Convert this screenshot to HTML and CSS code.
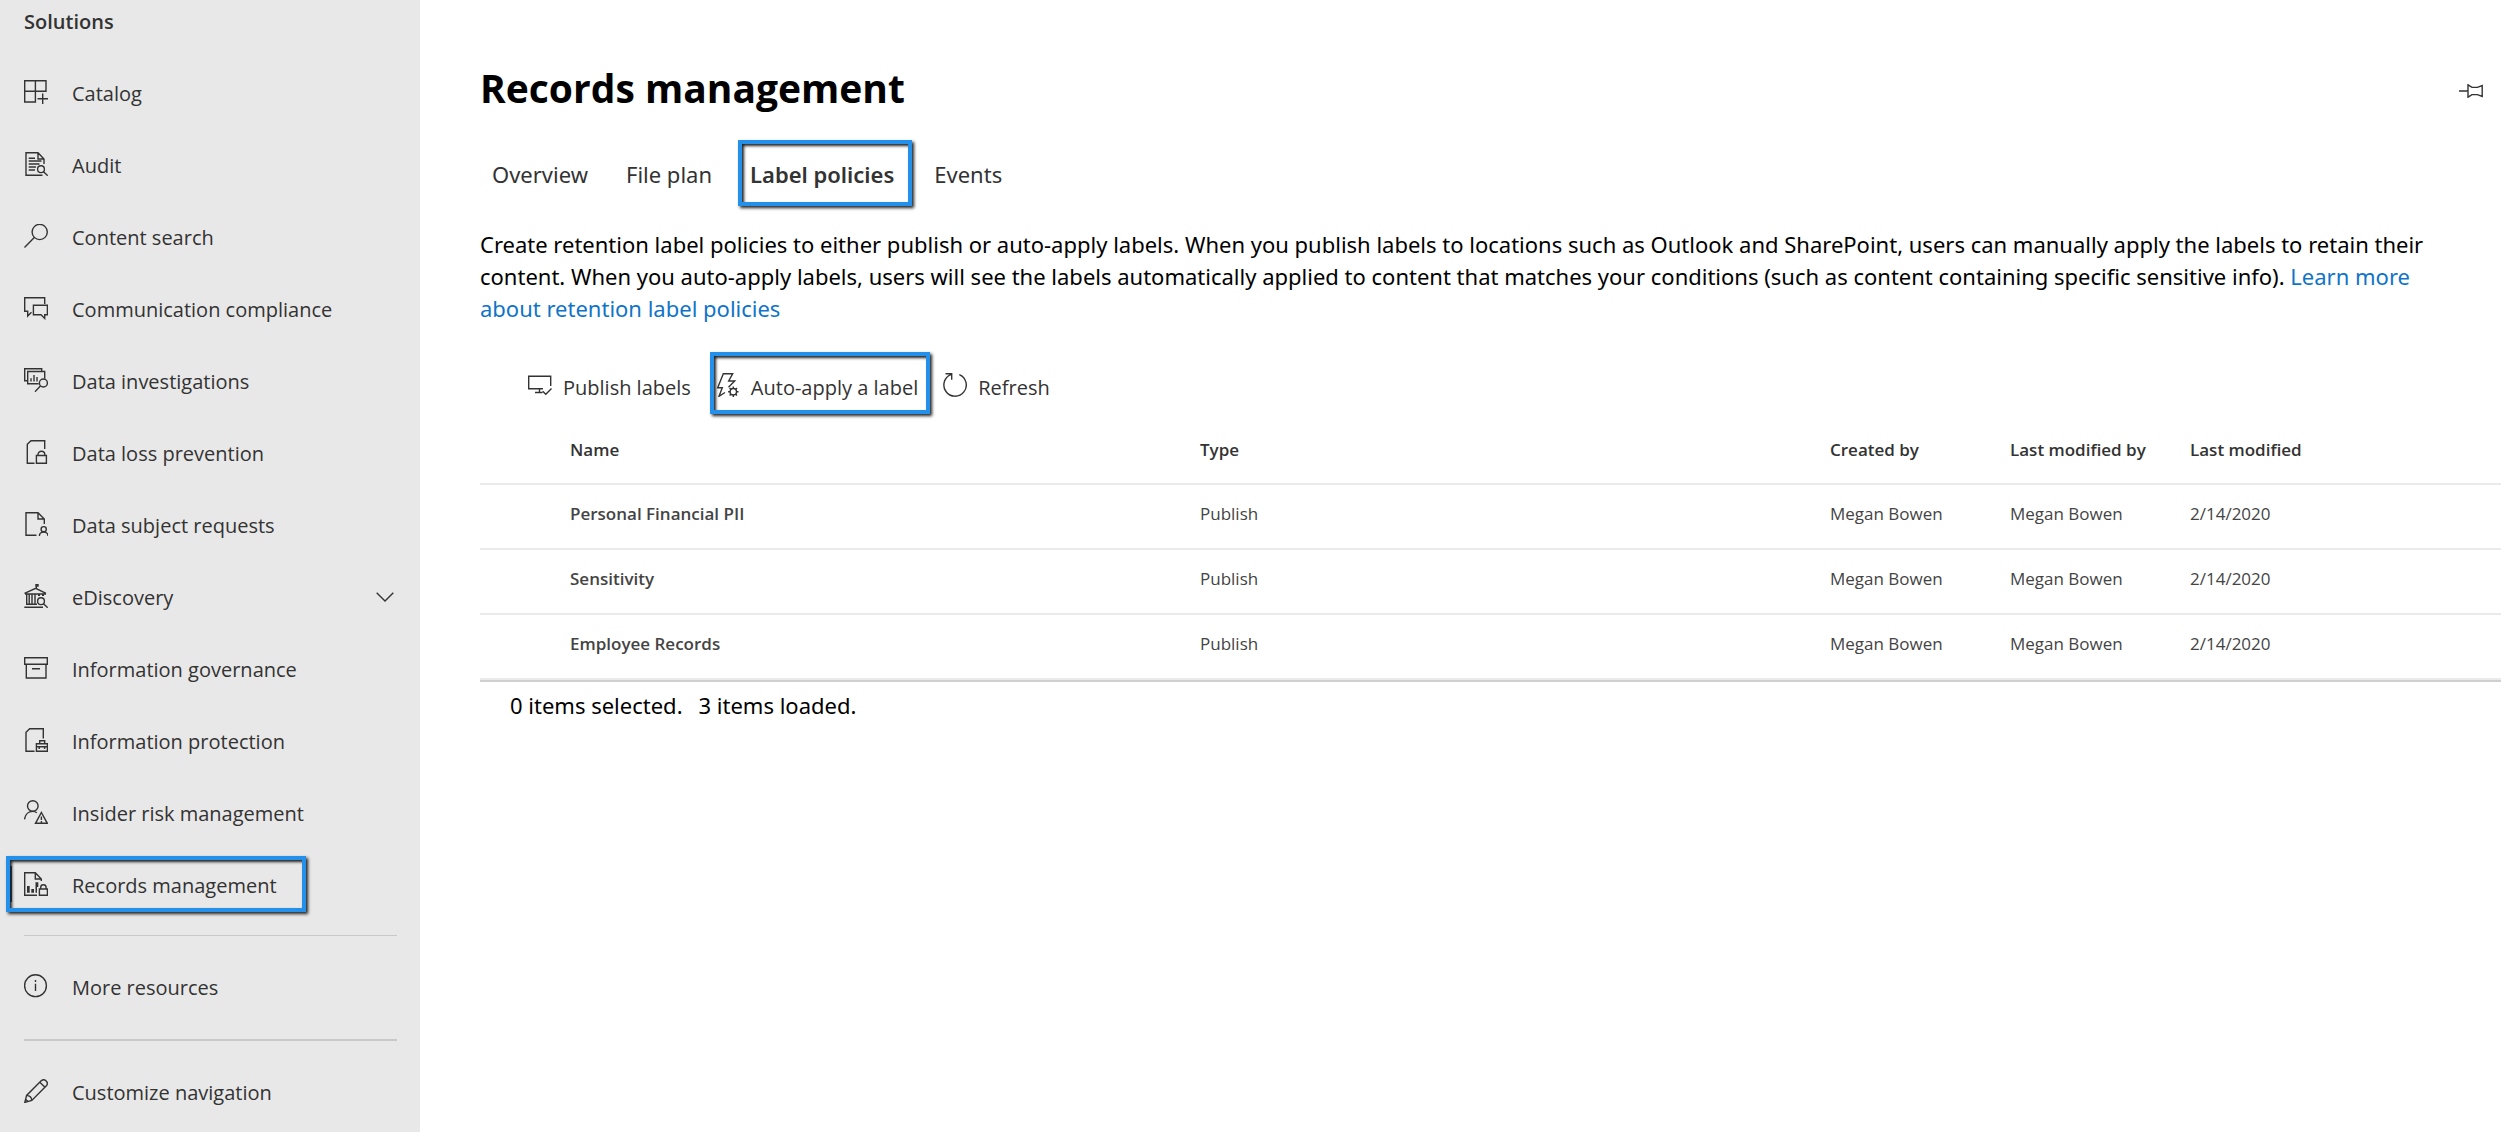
FILE: index.html
```html
<!DOCTYPE html>
<html lang="en">
<head>
<meta charset="utf-8">
<title>Records management</title>
<meta name="viewport" content="width=device-width, initial-scale=1">
<link rel="stylesheet" href="styles.css">
</head>
<body>
<div class="layout">
  <nav class="sidebar" aria-labelledby="nav-title">
    <h2 class="sidebar-title" id="nav-title">Solutions</h2>
    <ul class="nav-list">
      <li><a class="nav-item" href="#catalog"><svg class="icon" viewBox="0 0 24 24"><path d="M.7.7H22V11.3H.7zM11.4.7V22H.7V11M18.7 13.5V24M13.5 18.7H24"/></svg>Catalog</a></li>
      <li><a class="nav-item" href="#audit"><svg class="icon" viewBox="0 0 24 24"><path d="M18.5 23.3H2V.7H14L20 7V12M14 .7V7H20M4.7 6.3H11M4.7 9H17.5M4.7 12H15.5M4.7 15H12M4.7 18H11M19.5 19.7L23.7 23.7"/><circle cx="17" cy="17.2" r="3.4"/></svg>Audit</a></li>
      <li><a class="nav-item" href="#search"><svg class="icon" viewBox="0 0 24 24"><circle cx="15.7" cy="8" r="7.6"/><path d="M10.3 13.4L.5 23.4"/></svg>Content search</a></li>
      <li><a class="nav-item" href="#communication"><svg class="icon" viewBox="0 0 24 24"><path d="M20.7 8V1.7H.7V15.3H3.7V20L7.5 16.2M9.4 9.3H23.4V18.7H20.7V22.4L17 18.7H9.4z"/></svg>Communication compliance</a></li>
      <li><a class="nav-item" href="#investigations"><svg class="icon" viewBox="0 0 24 24"><path d="M3.7 12.7H.7V.7H17.7V3.3M14.7 15.7H3.7V3.5H20.7V10.5M7 10.3V13.5M10 7V13.5M13 9V13.5M16.4 18L11 23.7"/><circle cx="19.4" cy="15" r="4"/></svg>Data investigations</a></li>
      <li><a class="nav-item" href="#dlp"><svg class="icon" viewBox="0 0 24 24"><path d="M20.7 9V.7H7L3.3 4.3V23.3H10.5M12.4 15.5H22.4V23.3H12.4zM14 15.5V14.6a3.4 3.4 0 0 1 6.8 0V15.5"/></svg>Data loss prevention</a></li>
      <li><a class="nav-item" href="#subject-requests"><svg class="icon" viewBox="0 0 24 24"><path d="M12.5 23.3H2V.7H14L20.3 7V12M14 .7V7H20M15.4 24C15.4 18.8 24 18.8 24 24"/><circle cx="19.7" cy="17.2" r="2.6"/></svg>Data subject requests</a></li>
      <li><button class="nav-item" type="button" aria-expanded="false"><svg class="icon" viewBox="0 0 24 24"><path d="M12.3 0V4.5M.5 9.3L11.7 4.3L22 9.3M1 10H22M2.7 10V20M5.2 10V20M8 10V20M11 10V20M2 20.3H13M.3 23.3H19M19.5 19.7L23.7 23.7"/><path class="solid" d="M11.5 0H14.7V2.7H11.5zM14 10h2v2h-2zM18 10h2v2h-2z"/><circle cx="17" cy="17.2" r="3.4"/></svg>eDiscovery<svg class="chevron" viewBox="0 0 18 10"><path d="M.7.7L9 9L17.3.7"/></svg></button></li>
      <li><a class="nav-item" href="#governance"><svg class="icon" viewBox="0 0 24 24"><path d="M.7 1.8H23.3V8.3H.7zM2.3 8.3V22H22V8.3M8 12.7H16"/></svg>Information governance</a></li>
      <li><a class="nav-item" href="#protection"><svg class="icon" viewBox="0 0 24 24"><path d="M19.3 10.5V.7H5.7L2 4.3V23.3H10.5M12.4 15.7H23.4V23.3H12.4zM15.7 15.7V12.7H20.7V15.7M12.4 18.7H23.4M15.2 18V21M20.6 18V21"/></svg>Information protection</a></li>
      <li><a class="nav-item" href="#insider-risk"><svg class="icon" viewBox="0 0 24 24"><circle cx="8.8" cy="6" r="5.3"/><path d="M.5 19.3C1.2 14.5 4.5 11.4 8.8 11.4C10.5 11.4 11.6 11.9 12.8 12.8M17.4 12.5L23.3 23.3H11.5zM17.4 16.5V20M17.4 21V22.6"/></svg>Insider risk management</a></li>
      <li><a class="nav-item current highlight" href="#records" aria-current="page"><svg class="icon" viewBox="0 0 24 24"><path d="M13 23.3H.7V.7H11.3L17.3 7V9M11.3.7V7H17.3M15.4 17H23.4V23.3H15.4zM16.7 17V15.4a2.7 2.7 0 0 1 5.4 0V17"/><path class="solid" d="M3 14H5.7V20.7H3zM7.3 17H10V20.7H7.3zM11.5 10.3H14.3V15H13V20.7H11.5z"/></svg>Records management</a></li>
    </ul>
    <hr class="divider">
    <a class="nav-item" href="#more"><svg class="icon" viewBox="0 0 24 24"><circle cx="11.5" cy="11.7" r="10.9"/><path d="M11.5 9.7V17M11.5 6V8"/></svg>More resources</a>
    <hr class="divider thick">
    <a class="nav-item" href="#customize"><svg class="icon" viewBox="0 0 24 24"><path d="M.8 23.4L2.6 16.4L17.4 1.6C20.7-.8 25 3.2 22.6 6.6L7.8 21.4zM2.6 16.4C5.4 16.6 7.6 18.6 7.8 21.4M15.8 3.2L21 8.2M1.6 20.2L4 22.6"/></svg>Customize navigation</a>
  </nav>

  <main class="content">
    <header class="page-header">
      <h1 class="page-title">Records management</h1>
      <button class="pin" type="button" aria-label="Pin"><svg viewBox="0 0 24 14"><path d="M0 7H9M9 .8V13.2L13 10.6H18.4L23.2 12.4V1.6L18.4 3.4H13z"/></svg></button>
    </header>

    <div class="tabs" role="tablist">
      <button class="tab" type="button" role="tab" aria-selected="false">Overview</button>
      <button class="tab" type="button" role="tab" aria-selected="false">File plan</button>
      <button class="tab selected highlight" type="button" role="tab" aria-selected="true">Label policies</button>
      <button class="tab" type="button" role="tab" aria-selected="false">Events</button>
    </div>

    <p class="intro">Create retention label policies to either publish or auto-apply labels. When you publish labels to locations such as Outlook and SharePoint, users can manually apply the labels to retain their content. When you auto-apply labels, users will see the labels automatically applied to content that matches your conditions (such as content containing specific sensitive info). <a href="#learn">Learn more about retention label policies</a></p>

    <div class="toolbar">
      <button class="command" type="button"><svg class="icon" viewBox="0 0 24 24"><path d="M22.7 13V3.3H.7V15.7H15M11.5 15.7V19.3M7 19.5H14.5M14.7 18.3L17.8 21.3L23.5 15.6"/></svg>Publish labels</button>
      <button class="command highlight" type="button"><svg class="icon" viewBox="0 0 24 24"><path d="M9 19.5L3 23.3L6.3 14.7H1.7L7.3.7H16.7L12.7 8H18.7L12.5 14.2"/><circle cx="17.3" cy="18.7" r="3.2"/><path d="M17.3 13.5V15.5M17.3 21.9V23.9M12.1 18.7H14.1M20.5 18.7H22.5M13.6 15L15 16.4M21 15L19.6 16.4M13.6 22.4L15 21M21 22.4L19.6 21"/></svg>Auto-apply a label</button>
      <button class="command" type="button"><svg class="icon" viewBox="0 0 24 24"><path d="M2.5.7H8.7V6.8M8.4 1.4A11.2 11.2 0 1 0 16.3 1.6"/></svg>Refresh</button>
    </div>

    <table class="policies">
      <colgroup><col class="col-check"><col><col><col class="col-user"><col class="col-user"><col class="col-date"></colgroup>
      <thead>
        <tr><td></td><th scope="col">Name</th><th scope="col">Type</th><th scope="col">Created by</th><th scope="col">Last modified by</th><th scope="col">Last modified</th></tr>
      </thead>
      <tbody>
        <tr><td></td><th scope="row">Personal Financial PII</th><td>Publish</td><td>Megan Bowen</td><td>Megan Bowen</td><td>2/14/2020</td></tr>
        <tr><td></td><th scope="row">Sensitivity</th><td>Publish</td><td>Megan Bowen</td><td>Megan Bowen</td><td>2/14/2020</td></tr>
        <tr><td></td><th scope="row">Employee Records</th><td>Publish</td><td>Megan Bowen</td><td>Megan Bowen</td><td>2/14/2020</td></tr>
      </tbody>
    </table>
    <div class="status"><span>0 items selected.</span><span>3 items loaded.</span></div>
  </main>
</div>
</body>
</html>
```
FILE: styles.css
```css
* { box-sizing: border-box; }

body {
  margin: 0;
  background: #fff;
  color: #000;
  font-family: "Open Sans", "Noto Sans", sans-serif;
  font-size: 20px;
}

button {
  border: 0;
  padding: 0;
  background: none;
  color: inherit;
  font: inherit;
  text-align: left;
}

svg {
  display: block;
  flex: none;
  fill: none;
  stroke: #333;
  stroke-width: 1.4;
}

.icon { width: 24px; height: 24px; }
.solid { fill: #333; stroke: none; }

.layout { display: flex; min-height: 100vh; }

/* Navigation */
.sidebar {
  flex: none;
  width: 420px;
  background: #e8e8e8;
  color: #333;
}

.sidebar-title {
  margin: 0;
  padding-left: 24px;
  height: 57px;
  font-size: 20px;
  font-weight: 600;
  line-height: 44px;
}

.nav-list { margin: 0; padding: 0; list-style: none; }

.nav-item {
  display: flex;
  align-items: center;
  gap: 24px;
  width: 100%;
  height: 72px;
  padding: 0 26px 0 24px;
  color: #333;
  text-decoration: none;
}

.nav-item .icon { margin-bottom: 2px; }
.chevron { width: 18px; height: 10px; margin-left: auto; }

.divider {
  height: 1px;
  margin: 14px 23px 15px 24px;
  border: 0;
  background: #c8c8c8;
}

.divider.thick { height: 2px; margin-top: 16px; }

/* Blue call-out frame */
.highlight { position: relative; }

.highlight::after {
  content: "";
  position: absolute;
  inset: 0;
  border: 4px solid #2590ea;
  box-shadow: 2px 2px 3px #222, inset 2px 2px 3px #222;
  pointer-events: none;
}

.nav-item.highlight::after { inset: 7px 114px 9px 6px; }

/* Marker of the current page, at the left edge of its row */
.nav-item.current::before {
  content: "";
  position: absolute;
  left: 8px;
  top: 17px;
  width: 4px;
  height: 36px;
  background: #063a66;
}

/* Main area */
.content {
  flex: 1;
  min-width: 0;
  padding: 60px 14px 0 60px;
}

.page-header {
  display: flex;
  align-items: center;
  justify-content: space-between;
  height: 60px;
  padding-right: 18px;
}

.page-title { margin: 0; padding-bottom: 4px; font-size: 39px; font-weight: 700; line-height: 56px; }
.pin { padding-top: 2px; }
.pin svg { width: 24px; height: 14px; }

.tabs,
.intro,
.status {
  font-family: "Noto Sans", "Open Sans", sans-serif;
  font-size: 22px;
}

.tabs { display: flex; align-items: center; gap: 10px; margin-top: 20px; height: 66px; color: #333; }
.tab { padding: 2px 16px 0 12px; height: 66px; }
.tab.selected { padding-right: 18px; font-weight: 600; }

.intro { margin: 22px 0 0; padding-right: 32px; line-height: 32px; }
.intro a { color: #0f74c8; text-decoration: none; }

.toolbar { display: flex; align-items: center; gap: 7px; margin: 28px 0 0 42px; color: #333; }

.command {
  display: flex;
  align-items: center;
  gap: 11px;
  height: 62px;
  padding: 8px 12px 0 6px;
}

.command .icon { margin-bottom: 4px; }

/* Table */
.policies {
  width: 100%;
  margin-top: 6px;
  border-bottom: 2px solid #d0d0d0;
  border-spacing: 0;
  table-layout: fixed;
  color: #444;
  font-size: 17px;
}

.policies td,
.policies th {
  height: 65px;
  padding: 0 0 4px;
  border-bottom: 2px solid #eaeaea;
  font-size: 17px;
  text-align: left;
}

.policies th { font-weight: 600; }
.policies thead { color: #333; }
.policies tbody td,
.policies tbody th { padding-bottom: 6px; }
.col-check { width: 90px; }
.col-user { width: 180px; }
.col-date { width: 311px; }

.status { display: flex; gap: 16px; padding: 7px 30px; line-height: 32px; }
```
